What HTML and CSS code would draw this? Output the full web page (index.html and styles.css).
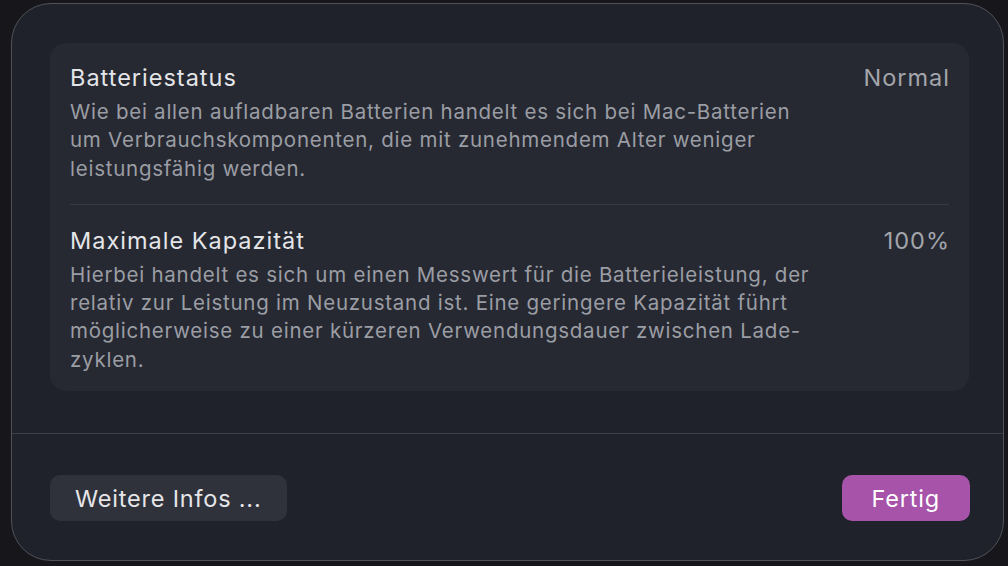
FILE: index.html
```html
<!DOCTYPE html>
<html lang="de">

<head>
    <meta charset="UTF-8">
    <meta name="viewport" content="width=device-width, initial-scale=1.0">
    <title>Batteriezustand</title>
    <link rel="stylesheet" href="styles.css">
</head>

<body>
    <!-- Dialog-Sheet -->
    <div class="sheet">
        <div class="group">
            <div class="row">
                <div class="row-text">
                    <div class="row-title">Batteriestatus</div>
                    <div class="row-desc">Wie bei allen aufladbaren Batterien handelt es sich bei Mac-Batterien um Verbrauchskomponenten, die mit zunehmendem Alter weniger leistungsfähig werden.</div>
                </div>
                <div class="row-value">Normal</div>
            </div>
            <div class="row">
                <div class="row-text">
                    <div class="row-title">Maximale Kapazität</div>
                    <div class="row-desc">Hierbei handelt es sich um einen Messwert für die Batterieleistung, der relativ zur Leistung im Neuzustand ist. Eine geringere Kapazität führt möglicherweise zu einer kürzeren Verwendungsdauer zwischen Lade-zyklen.</div>
                </div>
                <div class="row-value">100%</div>
            </div>
        </div>

        <div class="footer">
            <button class="btn">Weitere Infos ...</button>
            <button class="btn btn-primary">Fertig</button>
        </div>
    </div>
</body>

</html>
```

FILE: styles.css
```css
* {
    margin: 0;
    padding: 0;
    box-sizing: border-box;
}

body {
    background-color: #17171b;
    font-family: Inter, "Noto Sans", Arial, sans-serif;
    height: 566px;
    overflow: hidden;
    padding: 3px 0 0 11px;
}

/* Sheet */
.sheet {
    width: 993px;
    height: 558px;
    background-color: #1f222b;
    border: 1px solid #50525a;
    border-radius: 40px;
    display: flex;
    flex-direction: column;
}

.group {
    margin: 39px 34px 0 38px;
    background-color: #262932;
    border-radius: 16px;
    padding: 0 20px;
}

.row {
    display: flex;
    justify-content: space-between;
    align-items: flex-start;
    padding: 21px 0 21px;
}

.row + .row {
    border-top: 1px solid #383b44;
    padding-top: 22px;
    padding-bottom: 17px;
}

.row-text {
    width: 752px;
}

.row-title {
    font-size: 23.5px;
    line-height: 28px;
    letter-spacing: 1px;
    color: #e4e5e8;
    margin-bottom: 6px;
}

.row-desc {
    font-size: 20.5px;
    line-height: 28.3px;
    letter-spacing: 0.75px;
    color: #9b9da4;
}

.row-value {
    font-size: 23.5px;
    line-height: 28px;
    letter-spacing: 1px;
    color: #a3a5ab;
    margin-right: -1px;
}

/* Footer */
.footer {
    margin-top: 42px;
    border-top: 1px solid #3b3e46;
    padding: 41px 33px 0 38px;
    display: flex;
    justify-content: space-between;
}

.btn {
    height: 46px;
    padding: 0 25px;
    border: none;
    border-radius: 10px;
    background-color: #2f323b;
    color: #e6e6e9;
    font-family: inherit;
    font-size: 23.5px;
    letter-spacing: 0.8px;
}

.btn-primary {
    padding: 0 30px;
    background-color: #a653a9;
    color: #ffffff;
}
```
